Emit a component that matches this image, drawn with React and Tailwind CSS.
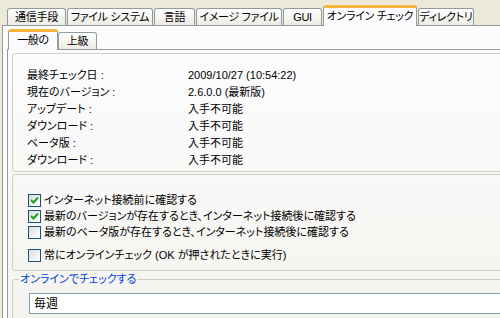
import React from "react"

const outerTabs = [
  { label: "通信手段", w: 59 },
  { label: "ファイル システム", w: 86 },
  { label: "言語", w: 41 },
  { label: "イメージ ファイル", w: 86 },
  { label: "GUI", w: 39 },
  { label: "オンライン チェック", w: 94, active: true },
  { label: "ディレクトリ", w: 56 },
]

const infoRows = [
  ["最終チェック日 :", "2009/10/27 (10:54:22)"],
  ["現在のバージョン :", "2.6.0.0 (最新版)"],
  ["アップデート :", "入手不可能"],
  ["ダウンロード :", "入手不可能"],
  ["ベータ版 :", "入手不可能"],
  ["ダウンロード :", "入手不可能"],
]

function Tab({ label, w, active }) {
  if (active) {
    return (
      <div
        style={{ width: w }}
        className="relative z-10 -mb-px h-[21px] whitespace-nowrap tracking-[-0.3px] rounded-t-[3px] border-x border-t-[3px] border-x-[#919B9C] border-t-[#F5B43C] bg-[#FCFCFE] flex items-center justify-center pb-[1px]"
      >
        {label}
      </div>
    )
  }
  return (
    <div
      style={{ width: w }}
      className="h-[17px] whitespace-nowrap tracking-[-0.3px] rounded-t-[3px] border border-b-0 border-[#919B9C] bg-gradient-to-b from-white to-[#ECEBE5] flex items-center justify-center"
    >
      {label}
    </div>
  )
}

function Checkbox({ checked }) {
  return (
    <div className="w-[13px] h-[13px] shrink-0 border border-[#1C5180] bg-gradient-to-br from-[#DCDCD7] to-white flex items-center justify-center">
      {checked && (
        <svg width="9" height="9" viewBox="0 0 9 9">
          <path d="M1 4 L3.5 6.5 L8 1.5" fill="none" stroke="#21A121" strokeWidth="2" />
        </svg>
      )}
    </div>
  )
}

function CheckRow({ checked, children, className = "" }) {
  return (
    <div className={"h-[16px] flex items-center gap-[3px] whitespace-nowrap " + className}>
      <Checkbox checked={checked} />
      <span>{children}</span>
    </div>
  )
}

export default function App() {
  return (
    <div className="w-[500px] h-[318px] overflow-hidden bg-[#ECE9D8] text-[11px] text-black font-['Liberation_Sans','Noto_Sans_CJK_JP',sans-serif] [font-feature-settings:'palt'] leading-none">
      {/* outer tab strip */}
      <div className="flex items-end gap-px pl-[7px] pt-[5px] h-[25px]">
        {outerTabs.map((t) => (
          <Tab key={t.label} {...t} />
        ))}
      </div>

      <div className="ml-[2px] w-[600px] h-[300px] border border-[#919B9C] bg-[#FCFCFE] pl-[4px] pt-[3px]">
        {/* inner tab strip */}
        <div className="flex items-end pl-[1px] h-[20px]">
          <Tab label="一般の" w={50} active />
          <Tab label="上級" w={39} />
        </div>

        <div className="h-[280px] border border-[#919B9C] bg-gradient-to-b from-[#FCFCFE] to-[#F4F3EE] pl-[4px] pt-[3px]">
          {/* info group */}
          <div className="h-[119px] rounded-[3px] border border-[#D0D0BF] pl-[14px] pt-[13px]">
            {infoRows.map(([k, v], i) => (
              <div key={i} className="flex h-[17px] items-center whitespace-nowrap">
                <span className="w-[161px]">{k}</span>
                <span>{v}</span>
              </div>
            ))}
          </div>

          {/* options group */}
          <div className="mt-[2px] h-[97px] rounded-[3px] border border-[#D0D0BF] pl-[15px] pt-[17px]">
            <CheckRow checked>インターネット接続前に確認する</CheckRow>
            <CheckRow checked>最新のバージョンが存在するとき、インターネット接続後に確認する</CheckRow>
            <CheckRow>最新のベータ版が存在するとき、インターネット接続後に確認する</CheckRow>
            <CheckRow className="mt-[7px]">常にオンラインチェック (OK が押されたときに実行)</CheckRow>
          </div>

          {/* schedule group */}
          <fieldset className="mt-[1px] h-[60px] rounded-[3px] border border-[#D0D0BF]">
            <legend className="ml-[6px] px-px text-[#0046D5] leading-[14px]">オンラインでチェックする</legend>
            <div className="ml-[16px] mt-[7px] h-[21px] border border-[#7F9DB9] bg-white flex items-center pl-[4px] text-[12px]">
              毎週
            </div>
          </fieldset>
        </div>
      </div>
    </div>
  )
}
